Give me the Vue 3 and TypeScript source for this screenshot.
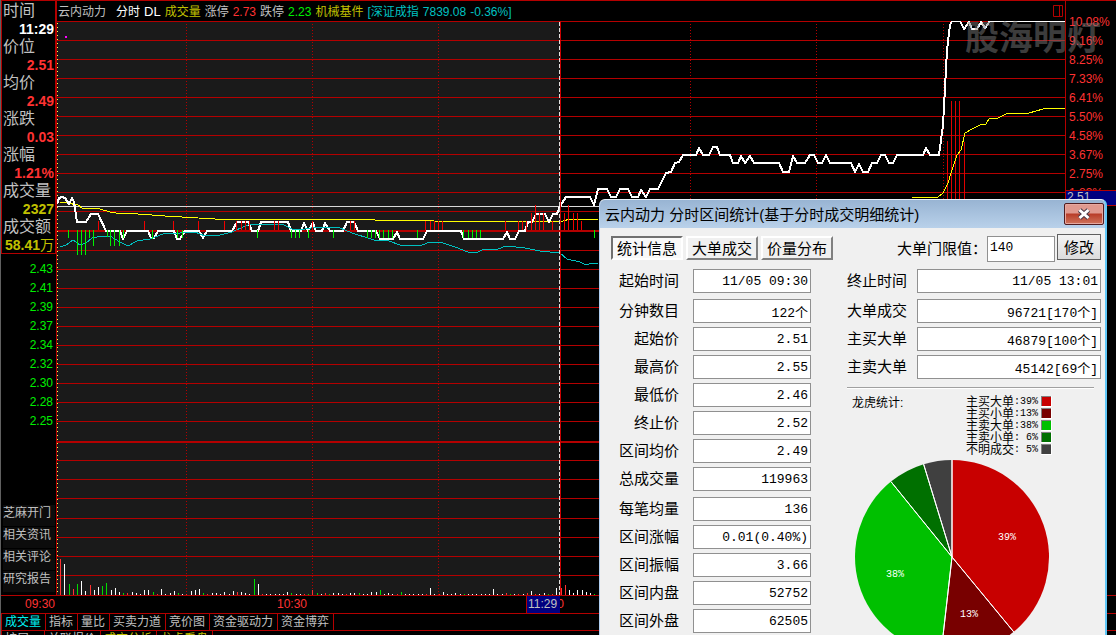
<script setup lang="ts">
type Bar = [x: number, end: number]
type Volume = [x: number, height: number, color: 'w' | 'r' | 'g']
interface Quote { label: string; value: string; tone: string; unit?: string }
interface Field { label: string; value: string }

const quotes: Quote[] = [
  { label: '时间', value: '11:29', tone: 'white' },
  { label: '价位', value: '2.51', tone: 'red' },
  { label: '均价', value: '2.49', tone: 'red' },
  { label: '涨跌', value: '0.03', tone: 'red' },
  { label: '涨幅', value: '1.21%', tone: 'red' },
  { label: '成交量', value: '2327', tone: 'yellow' },
  { label: '成交额', value: '58.41', tone: 'yellow', unit: '万' },
]
const prices = ['2.43', '2.41', '2.39', '2.37', '2.34', '2.32', '2.30', '2.28', '2.25']
const links = ['芝麻开门', '相关资讯', '相关评论', '研究报告']
const percents = ['10.08%', '9.16%', '8.25%', '7.33%', '6.41%', '5.50%', '4.58%', '3.67%', '2.75%', '1.83%']
const tabs = ['成交量', '指标', '量比', '买卖力道', '竞价图', '资金驱动力', '资金博弈']
const extras = [
  { text: '扩展', tone: 'grey' },
  { text: '关联报价', tone: 'grey' },
  { text: '成交分析', tone: 'yellow' },
  { text: '龙虎看盘', tone: 'yellow' },
]

const gridLines = [21, 40, 59, 78, 97, 116, 135, 154, 173, 192, 211, 250, 269, 288, 307, 326, 345, 364, 383, 402, 421, 460, 479, 498, 518, 537, 556, 575]
const strongLines = [230, 441]
const timeLines = [186, 312, 438, 690, 816, 943]

const priceLine =
  '57,204 59,198 62,197 65,198 69,204 72,198 74,202 77,222 86,222 91,214 98,214 106,231 120,231 123,239 127,231 148,231 151,238 154,238 158,231 174,231 177,239 180,239 185,231 199,231 203,238 207,231 232,231 237,222 248,222 252,231 258,231 261,222 288,222 291,231 301,231 304,223 308,231 313,223 316,231 322,231 325,223 330,231 343,231 347,222 354,222 358,231 376,231 380,239 393,239 397,232 400,239 423,239 427,231 461,231 464,239 503,239 507,232 510,239 515,239 519,231 525,231 528,222 532,222 536,214 545,214 549,222 553,214 557,214 560,206 566,197 590,197 594,205 598,189 607,189 611,197 616,197 620,189 628,189 632,197 638,197 641,190 646,197 650,189 658,189 666,173 671,172 675,163 679,162 683,155 696,155 699,148 703,155 709,155 713,147 717,147 720,155 730,155 733,163 738,163 741,156 745,163 750,156 754,163 779,163 783,172 789,172 793,156 797,163 805,163 810,155 814,155 818,163 822,163 826,155 830,163 851,163 855,172 859,164 863,172 868,172 872,163 877,163 881,155 885,155 889,163 893,163 897,155 923,155 926,148 930,155 939,155 943,125 945,88 947,50 950,25 952,21 960,21 964,29 969,22 972,29 977,29 981,22 985,28 990,21 1065,21'
const averageLeft =
  '60,202 67,203 78,205 82,208 100,209 110,212 116,213 138,214 165,216 215,219 280,219 374,219 375,220 432,220 434,221 563,221 570,219 598,219'
const averageRight =
  '912,197 938,197 943,193 948,183 952,170 957,155 961,150 965,133 972,129 980,125 986,124 989,119 998,118 1006,114 1029,113 1043,109 1065,108'
const indexLine =
  '60,247 66,245 73,240 80,245 86,243 92,238 103,236 110,236 120,242 128,246 137,241 150,239 163,234 180,233 195,232 205,236 220,235 232,232 243,227 250,224 284,225 292,229 305,229 318,227 340,228 352,233 374,240 386,240 400,245 422,245 430,242 443,243 455,247 468,252 478,252 484,249 498,249 506,246 525,248 540,251 560,253 567,259 580,262 586,265 592,263 598,263'

const greens: Bar[] = [
  [68, 238], [77, 255], [81, 255], [85, 255], [89, 238], [93, 246], [107, 237], [110, 246], [114, 246], [119, 246], [123, 238],
  [152, 239], [177, 238], [182, 238], [257, 238], [291, 238], [295, 238], [299, 238], [308, 238], [333, 238], [367, 238],
  [371, 238], [375, 238], [379, 238], [383, 238], [388, 238], [392, 238], [417, 238], [463, 238], [468, 238], [472, 238],
  [476, 238], [480, 238], [594, 238],
]
const reds: Bar[] = [
  [98, 221], [144, 221], [173, 221], [198, 221], [224, 221], [236, 221], [241, 221], [245, 221], [249, 221], [274, 221], [278, 221],
  [312, 221], [350, 221], [354, 221], [425, 221], [430, 221], [434, 221], [438, 221], [442, 221], [505, 221], [518, 221], [522, 221],
  [526, 221], [531, 213], [535, 205], [539, 213], [543, 213], [552, 221], [564, 213], [568, 205], [573, 213], [577, 213], [581, 221],
]
const surge: Bar[] = [[947, 141], [951, 101], [955, 101], [959, 101], [964, 142]]
const volumes: Volume[] = [
  [60, 36, 'r'], [64, 31, 'w'], [69, 11, 'g'], [73, 6, 'r'], [77, 11, 'g'], [81, 14, 'w'], [85, 4, 'w'], [90, 10, 'r'], [94, 5, 'w'],
  [98, 8, 'w'], [102, 9, 'g'], [106, 12, 'g'], [111, 5, 'w'], [115, 7, 'w'], [119, 3, 'w'], [123, 2, 'g'], [127, 2, 'r'], [132, 3, 'w'],
  [136, 2, 'w'], [140, 1, 'w'], [144, 5, 'w'], [148, 5, 'w'], [153, 3, 'g'], [157, 1, 'r'], [161, 6, 'w'], [165, 1, 'w'], [170, 2, 'w'],
  [174, 4, 'w'], [178, 2, 'g'], [182, 1, 'w'], [186, 1, 'r'], [191, 4, 'w'], [195, 5, 'w'], [199, 6, 'w'], [203, 2, 'g'], [207, 1, 'r'],
  [212, 2, 'w'], [216, 2, 'w'], [220, 1, 'w'], [224, 3, 'w'], [229, 1, 'w'], [233, 4, 'w'], [237, 3, 'r'], [241, 3, 'w'], [245, 2, 'w'],
  [249, 1, 'w'], [254, 16, 'g'], [258, 11, 'w'], [262, 1, 'r'], [266, 1, 'w'], [270, 1, 'w'], [275, 1, 'w'], [279, 1, 'w'], [283, 1, 'w'],
  [287, 3, 'w'], [291, 2, 'g'], [296, 1, 'w'], [300, 1, 'w'], [304, 1, 'r'], [308, 1, 'g'], [312, 5, 'r'], [317, 2, 'g'], [321, 1, 'w'],
  [325, 2, 'r'], [329, 1, 'g'], [333, 2, 'w'], [338, 2, 'w'], [342, 1, 'w'], [346, 1, 'r'], [350, 2, 'w'], [354, 2, 'w'], [359, 2, 'g'],
  [363, 1, 'w'], [367, 1, 'w'], [371, 3, 'w'], [376, 3, 'w'], [380, 5, 'g'], [384, 1, 'w'], [388, 2, 'w'], [392, 1, 'w'], [397, 1, 'r'],
  [401, 3, 'g'], [405, 1, 'w'], [409, 1, 'w'], [413, 1, 'w'], [418, 1, 'w'], [422, 1, 'w'], [426, 1, 'r'], [430, 7, 'w'], [434, 1, 'w'],
  [439, 1, 'r'], [443, 3, 'w'], [447, 1, 'w'], [451, 1, 'w'], [455, 2, 'w'], [460, 1, 'w'], [464, 1, 'g'], [468, 1, 'w'], [472, 1, 'w'],
  [476, 1, 'w'], [481, 1, 'w'], [485, 1, 'w'], [489, 1, 'w'], [493, 6, 'w'], [497, 1, 'w'], [502, 1, 'w'], [506, 2, 'r'], [510, 1, 'g'],
  [514, 1, 'w'], [518, 1, 'r'], [523, 1, 'w'], [527, 2, 'r'], [531, 4, 'w'], [535, 1, 'r'], [539, 1, 'w'], [544, 2, 'w'], [548, 1, 'g'],
  [552, 1, 'r'], [556, 7, 'w'], [561, 7, 'r'], [565, 10, 'r'], [569, 5, 'w'], [573, 2, 'w'], [577, 5, 'w'], [582, 5, 'w'], [586, 3, 'w'],
  [590, 2, 'w'], [594, 1, 'g'],
]
const volumeColors = { w: '#ffffff', r: '#ff3232', g: '#00dc00' }

const leftGroups: Field[][] = [
  [{ label: '起始时间', value: '11/05 09:30' }],
  [
    { label: '分钟数目', value: '122个' },
    { label: '起始价', value: '2.51' },
    { label: '最高价', value: '2.55' },
    { label: '最低价', value: '2.46' },
    { label: '终止价', value: '2.52' },
    { label: '区间均价', value: '2.49' },
    { label: '总成交量', value: '119963' },
  ],
  [
    { label: '每笔均量', value: '136' },
    { label: '区间涨幅', value: '0.01(0.40%)' },
    { label: '区间振幅', value: '3.66' },
    { label: '区间内盘', value: '52752' },
    { label: '区间外盘', value: '62505' },
  ],
]
const rightGroups: Field[][] = [
  [{ label: '终止时间', value: '11/05 13:01' }],
  [
    { label: '大单成交', value: '96721[170个]' },
    { label: '主买大单', value: '46879[100个]' },
    { label: '主卖大单', value: '45142[69个]' },
  ],
]

const slices = [
  { name: '主买大单', share: '39%', color: '#c80000', from: 0, to: 140.5 },
  { name: '主买小单', share: '13%', color: '#780000', from: 140.5, to: 186.5 },
  { name: '主卖大单', share: '38%', color: '#00c000', from: 186.5, to: 321 },
  { name: '主卖小单', share: '6%', color: '#007000', from: 321, to: 343 },
  { name: '不明成交', share: '5%', color: '#404040', from: 343, to: 360 },
]
const pieLabels = [
  { text: '39%', x: 153, y: 81 },
  { text: '38%', x: 41, y: 118 },
  { text: '13%', x: 115, y: 158 },
]
function slicePath(from: number, to: number): string {
  const point = (deg: number) => {
    const a = (deg * Math.PI) / 180
    return `${(98 + 97 * Math.sin(a)).toFixed(2)} ${(98 - 97 * Math.cos(a)).toFixed(2)}`
  }
  return `M98 98L${point(from)}A97 97 0 0 1 ${point(to)}Z`
}
</script>

<template>
  <div class="app">
    <div class="main">
      <aside class="side">
        <dl class="quotes">
          <template v-for="q in quotes" :key="q.label">
            <dt>{{ q.label }}</dt>
            <dd :class="q.tone">{{ q.value }}<span v-if="q.unit" class="unit">{{ q.unit }}</span></dd>
          </template>
        </dl>
        <ul class="prices">
          <li v-for="p in prices" :key="p">{{ p }}</li>
        </ul>
        <nav class="links">
          <a v-for="l in links" :key="l" href="#">{{ l }}</a>
        </nav>
      </aside>

      <section class="chart">
        <header class="bar">
          <span class="name">云内动力</span>
          <span class="white">分时</span>
          <span class="white big">DL</span>
          <span class="yellow">成交量</span>
          <span>涨停</span>
          <span class="red">2.73</span>
          <span>跌停</span>
          <span class="green">2.23</span>
          <span class="yellow">机械基件</span>
          <span class="cyan">[深证成指</span>
          <span class="cyan">7839.08</span>
          <span class="cyan">-0.36%]</span>
          <svg class="split" width="11" height="12" viewBox="0 0 11 12">
            <path d="M.5.5h9v11h-9zM6.5.5v11" fill="none" stroke="#b40000" />
          </svg>
        </header>
        <svg class="plot" viewBox="57 21 1008 574" preserveAspectRatio="none">
          <rect x="57" y="21" width="503" height="574" fill="#1a1a1a" />
          <g fill="#b40000" shape-rendering="crispEdges">
            <rect v-for="y in gridLines" :key="y" x="57" :y="y" width="1008" height="1" />
            <rect v-for="y in strongLines" :key="y" x="57" :y="y" width="1008" height="2" />
          </g>
          <g stroke="#b40000" stroke-dasharray="1 2" shape-rendering="crispEdges">
            <line v-for="x in timeLines" :key="x" :x1="x + 0.5" :x2="x + 0.5" y1="24" y2="595" />
          </g>
          <line x1="57.5" x2="57.5" y1="23" y2="595" stroke="#ffff50" stroke-dasharray="1 3" shape-rendering="crispEdges" />
          <g fill="#e00000" shape-rendering="crispEdges">
            <rect v-for="b in surge" :key="b[0]" :x="b[0]" :y="b[1]" width="1" :height="199 - b[1]" />
          </g>
          <g shape-rendering="crispEdges">
            <rect v-for="(v, i) in volumes" :key="i" :x="v[0]" :y="595 - v[1]" width="1" :height="v[1]" :fill="volumeColors[v[2]]" />
            <rect x="65" y="36" width="2" height="2" fill="#ff00ff" />
            <rect x="57" y="206" width="545" height="1" fill="#d8d8d8" />
          </g>
          <g fill="none" stroke-linejoin="round" shape-rendering="crispEdges">
            <polyline :points="averageLeft" stroke="#ffff00" />
            <polyline :points="averageRight" stroke="#ffff00" />
            <polyline :points="priceLine" stroke="#ffffff" stroke-width="2" />
            <polyline :points="indexLine" stroke="#00c0c0" />
          </g>
          <g shape-rendering="crispEdges">
            <rect v-for="b in reds" :key="b[0]" :x="b[0]" :y="b[1]" width="1" :height="230 - b[1]" fill="#f00000" />
            <rect v-for="b in greens" :key="b[0]" :x="b[0]" y="230" width="1" :height="b[1] - 230" fill="#00f000" />
            <rect x="560" y="21" width="1" height="574" fill="#c80000" />
            <line x1="559.5" x2="559.5" y1="22" y2="595" stroke="#e0e0e0" stroke-dasharray="4 2" />
          </g>
        </svg>
      </section>

      <aside class="axis">
        <ul>
          <li v-for="p in percents" :key="p">{{ p }}</li>
        </ul>
        <span class="mark">2.51</span>
      </aside>
      <div class="watermark">股海明灯</div>
    </div>

    <div class="times">
      <span class="t-open">09:30</span>
      <span class="t-mid">10:30</span>
      <span class="t-noon">13:00</span>
      <span class="t-now">11:29</span>
    </div>
    <nav class="tabs">
      <button v-for="(t, i) in tabs" :key="t" type="button" :class="{ active: i === 0 }">{{ t }}</button>
    </nav>
    <nav class="tabs extra">
      <button v-for="t in extras" :key="t.text" type="button" :class="t.tone">{{ t.text }}</button>
    </nav>

    <section class="dialog" role="dialog" aria-labelledby="dialog-title">
      <header class="title">
        <h1 id="dialog-title">云内动力 分时区间统计(基于分时成交明细统计)</h1>
        <button type="button" class="close" aria-label="关闭">
          <svg width="16" height="14" viewBox="0 0 16 14">
            <path d="M3.5 3l9 8M12.5 3l-9 8" fill="none" stroke="#4a3a48" stroke-width="5" />
            <path d="M3.5 3l9 8M12.5 3l-9 8" fill="none" stroke="#fff" stroke-width="3" />
          </svg>
        </button>
      </header>
      <div class="body">
        <div class="tools">
          <button type="button" class="tab pressed">统计信息</button>
          <button type="button" class="tab">大单成交</button>
          <button type="button" class="tab">价量分布</button>
          <label for="threshold">大单门限值：</label>
          <input id="threshold" type="text" value="140" />
          <button type="button" class="modify">修改</button>
        </div>
        <div class="columns">
          <div class="left">
            <div v-for="(g, i) in leftGroups" :key="i" class="group">
              <div v-for="(f, j) in g" :key="f.label" class="field">
                <label :for="`l${i}-${j}`">{{ f.label }}</label>
                <input :id="`l${i}-${j}`" type="text" :value="f.value" readonly />
              </div>
            </div>
          </div>
          <div class="right">
            <div v-for="(g, i) in rightGroups" :key="i" class="group">
              <div v-for="(f, j) in g" :key="f.label" class="field">
                <label :for="`r${i}-${j}`">{{ f.label }}</label>
                <input :id="`r${i}-${j}`" type="text" :value="f.value" readonly />
              </div>
            </div>
            <hr />
            <div class="summary">
              <h2>龙虎统计:</h2>
              <ul class="legend">
                <li v-for="s in slices" :key="s.name">
                  <span>{{ s.name }}</span><span class="share">:{{ s.share.padStart(3) }}</span>
                  <svg class="swatch" width="11" height="11" viewBox="0 0 11 11">
                    <path d="M0 0h11v11H0z" fill="#fff" />
                    <path d="M0 0h10v1H1v9H0z" fill="#808080" />
                    <path d="M1 1h9v9H1z" :fill="s.color" />
                  </svg>
                </li>
              </ul>
            </div>
            <svg class="pie" width="196" height="196" viewBox="0 0 196 196">
              <path v-for="s in slices" :key="s.name" :d="slicePath(s.from, s.to)" :fill="s.color" />
              <path v-for="s in slices" :key="s.share" :d="slicePath(s.from, s.from)" stroke="#fff" />
              <text v-for="l in pieLabels" :key="l.text" :x="l.x" :y="l.y">{{ l.text }}</text>
            </svg>
          </div>
        </div>
      </div>
    </section>
  </div>
</template>

<style>
body {
  margin: 0;
  background: #000;
}
</style>

<style scoped>
.app {
  position: relative;
  display: grid;
  grid-template-rows: 1fr 18px 17px 5px;
  height: 100vh;
  overflow: hidden;
  box-sizing: border-box;
  border-left: 1px solid #606060;
  background: #000;
  color: #c0c0c0;
  font-family: "Liberation Sans", "Noto Sans CJK SC", sans-serif;
  font-size: 12px;
}
ul, dl, dd, h1, h2 { margin: 0; padding: 0; list-style: none; font-weight: normal; }
button, input { font: inherit; color: inherit; box-sizing: border-box; margin: 0; padding: 0; border-radius: 0; }
.white { color: #fff; }
.red { color: #ff3232; }
.yellow { color: #c0c000; }
.green { color: #00f000; }
.cyan { color: #00c0c0; }

.main {
  position: relative;
  display: grid;
  grid-template-columns: 56px minmax(0, 1fr) 51px;
  min-height: 0;
}
.side {
  display: flex;
  flex-direction: column;
  border-right: 1px solid #b40000;
}
.quotes { border: 1px solid #b40000; }
.quotes dt { height: 18px; line-height: 20px; padding-left: 1px; font-size: 16px; }
.quotes dd {
  display: flex;
  justify-content: flex-end;
  height: 18px;
  line-height: 20px;
  padding-right: 1px;
  font-size: 14px;
  font-weight: bold;
  white-space: nowrap;
}
.unit { font-weight: normal; }
.prices { padding-top: 6px; }
.prices li { height: 19px; line-height: 19px; padding-right: 3px; text-align: right; color: #00f000; }
.links { display: flex; flex-direction: column; gap: 1px; margin: auto 1px 3px 2px; }
.links a { height: 21px; line-height: 17px; background: #0c0c0c; color: #c0c0c0; text-decoration: none; white-space: nowrap; }

.chart { display: flex; flex-direction: column; min-width: 0; min-height: 0; }
.bar {
  display: flex;
  flex: none;
  gap: 4px;
  height: 21px;
  line-height: 22px;
  padding-left: 1px;
  box-sizing: border-box;
  border-top: 1px solid #b40000;
  white-space: nowrap;
}
.name { margin-right: 6px; }
.big { font-size: 13px; }
.split { margin: 4px 1px 0 auto; }
.plot { display: block; width: 100%; flex: 1; min-height: 0; }

.axis { border-left: 1px solid #b40000; border-top: 1px solid #b40000; color: #ff3232; padding-top: 12px; }
.axis ul { height: 177px; overflow: hidden; }
.axis li { height: 19px; line-height: 19px; padding-left: 3px; }
.mark { display: block; height: 14px; line-height: 13px; padding-left: 1px; border-top: 1px solid #b40000; border-bottom: 1px solid #b40000; background: #000080; color: #c0c0c0; }
.watermark {
  position: absolute;
  top: 14px;
  right: 15px;
  font-size: 34px;
  line-height: 48px;
  font-weight: bold;
  color: rgba(120, 120, 120, 0.5);
}

.times { position: relative; border-top: 1px solid #b40000; line-height: 17px; color: #ff3232; }
.times span { position: absolute; top: 0; }
.t-open { left: 24px; }
.t-mid { left: 276px; }
.t-noon { left: 533px; }
.t-now { left: 525px; width: 32px; padding-left: 1px; background: #000080; color: #c0c0c0; border-left: 1px solid #b40000; }

.tabs { display: flex; border-top: 1px solid #b40000; border-left: 1px solid #b40000; overflow: hidden; }
.tabs button {
  height: 16px;
  line-height: 17px;
  padding: 0 4px 0 3px;
  border: 0;
  border-right: 1px solid #b40000;
  background: none;
  text-align: left;
  white-space: nowrap;
}
.tabs button:first-child { min-width: 43px; }
.tabs .active { color: #00f0f0; }
.tabs .yellow { color: #c0c000; }

.dialog {
  position: absolute;
  top: 199px;
  right: 9px;
  width: 508px;
  height: 480px;
  box-sizing: border-box;
  border: 1px solid #b0cdf0;
  border-top-color: #e8f2fa;
  border-right: 2px solid #60c8f8;
  border-radius: 6px 6px 0 0;
  overflow: hidden;
  background: #f0f0f0;
  color: #000;
}
.title {
  display: flex;
  align-items: flex-start;
  justify-content: space-between;
  height: 28px;
  padding: 0 1px 0 5px;
  background: linear-gradient(#98b4d3, #b9d1ea);
}
h1 { font-size: 15px; line-height: 29px; white-space: nowrap; }
.close {
  display: flex;
  align-items: center;
  justify-content: center;
  width: 40px;
  height: 22px;
  margin-top: 3px;
  border: 1px solid #501c20;
  border-radius: 2px;
  box-shadow: inset 0 0 0 1px #e6a8a0;
  background: linear-gradient(#e0998f 0 45%, #b83c28 50%, #d0745c);
}
.body { padding: 6px 4px 0 11px; font-size: 15px; }
.tools { display: flex; height: 28px; }
.tab {
  width: 72px;
  height: 24px;
  margin: 2px 3px 0 0;
  line-height: 21px;
  border: 2px solid;
  border-color: #fff #808080 #808080 #fff;
  background: #f0f0f0;
  white-space: nowrap;
}
.pressed { border-color: #707070 #fff #fff #707070; background: #f8f8f8; }
.tools label { margin-left: auto; line-height: 29px; white-space: nowrap; }
.tools input {
  width: 68px;
  height: 26px;
  margin-top: 2px;
  padding: 0 2px 4px;
  border: 1px solid #909090;
  background: #fff;
}
.modify { width: 44px; height: 26px; margin-left: 2px; border: 1px solid #606060; background: linear-gradient(#f4f4f4, #dcdcdc); line-height: 23px; }
input { font-family: "Liberation Mono", "Noto Sans CJK SC", monospace; font-size: 13px; }
.columns { display: flex; justify-content: space-between; padding-top: 7px; }
.left { width: 200px; }
.right { width: 254px; }
.group { display: flex; flex-direction: column; gap: 4px; margin-bottom: 6px; }
.field { display: flex; justify-content: space-between; height: 24px; }
.field label { line-height: 24px; white-space: nowrap; }
.left label { width: 68px; text-align: right; }
.field input { height: 24px; padding: 0 2px; text-align: right; border: 1px solid #909090; background: #fff; }
.left input { width: 118px; }
.right input { width: 184px; }
hr { height: 1px; margin: 8px 7px 0 0; border: 0; border-top: 1px solid #a0a0a0; background: #fff; }
.summary { display: flex; justify-content: space-between; padding: 7px 49px 0 5px; font-size: 12px; }
h2 { font-size: 12px; line-height: 15px; }
.legend li { display: flex; height: 12px; line-height: 12px; white-space: pre; }
.share { font-family: "Liberation Mono", monospace; font-size: 10px; }
.swatch { margin-left: 3px; }
.pie { display: block; margin: 3px 0 0 7px; }
.pie path { stroke-width: 1; }
.pie text { fill: #fff; font-family: "Liberation Mono", monospace; font-size: 10px; text-anchor: middle; }
</style>
